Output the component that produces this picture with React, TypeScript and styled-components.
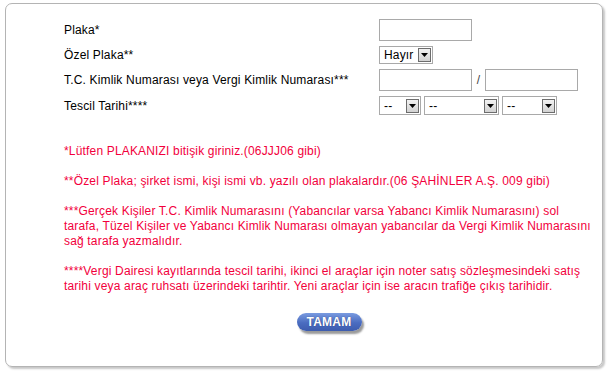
import React, { FC } from 'react';
import styled, { createGlobalStyle } from 'styled-components';

const GlobalStyle = createGlobalStyle`
  html, body {
    margin: 0;
    padding: 0;
    background: #fff;
  }
  body {
    font-family: "Liberation Sans", Arial, sans-serif;
    font-size: 12px;
    letter-spacing: 0.17px;
    color: #000;
  }
`;

const Page = styled.div`
  padding: 3px 0 0 5px;
  width: 608px;
  height: 371px;
  box-sizing: border-box;
`;

const Panel = styled.div`
  width: 598px;
  height: 364px;
  box-sizing: border-box;
  border: 1px solid #b4b4b4;
  border-radius: 7px;
  box-shadow: 2px 2px 2px #c8c8c8;
  padding: 15px 12px 0 58px;
`;

const FormGrid = styled.div`
  display: grid;
  grid-template-columns: 315px auto;
  grid-template-rows: 22px 18px 22px 19px;
  row-gap: 5px;
  align-items: center;
`;

const Label = styled.div`
  line-height: 14px;
  white-space: nowrap;
`;

const Field = styled.div`
  display: flex;
  align-items: center;
  gap: 3px;
`;

const TextBox = styled.input<{ w: number }>`
  width: ${p => p.w}px;
  height: 22px;
  box-sizing: border-box;
  border: 1px solid #a9a9a9;
  background: #fff;
  padding: 0 3px;
  margin: 0;
  font: 12px "Liberation Sans", Arial, sans-serif;
  outline: none;
`;

const Slash = styled.span`
  width: 7px;
  text-align: center;
  color: #444;
`;

const SelectBox = styled.div<{ w: number; h: number }>`
  width: ${p => p.w}px;
  height: ${p => p.h}px;
  box-sizing: border-box;
  border: 1px solid #a9a9a9;
  background: #fff;
  display: flex;
  align-items: center;
  justify-content: space-between;
  padding: 0 1px 0 4px;
  font-size: 12px;
  color: #000;
`;

const ArrowBtn = styled.span`
  width: 13px;
  height: 14px;
  box-sizing: border-box;
  border: 1px solid #6d6d6d;
  background: linear-gradient(#f2f2f2, #d2d2d2);
  display: flex;
  align-items: center;
  justify-content: center;
`;

const Select: FC<{ value: string; w: number; h?: number }> = ({ value, w, h = 19 }) => (
  <SelectBox w={w} h={h}>
    <span>{value}</span>
    <ArrowBtn>
      <svg width="7" height="4" viewBox="0 0 7 4">
        <polygon points="0,0 7,0 3.5,4" fill="#000" />
      </svg>
    </ArrowBtn>
  </SelectBox>
);

const Notes = styled.div`
  margin-top: 29px;
  color: #f2003c;
  line-height: 15px;
  display: flex;
  flex-direction: column;
  gap: 15px;
  white-space: nowrap;
`;

const Note = styled.p`
  margin: 0;
`;

const ButtonRow = styled.div`
  display: flex;
  justify-content: center;
  width: 530px;
  margin-top: 19px;
`;

const OkButton = styled.button`
  width: 65px;
  height: 18px;
  border: none;
  border-radius: 9px;
  background: linear-gradient(#7a9be0, #4a6cc0 55%, #3d5cae);
  box-shadow: 2px 3px 2px #9a9a9a;
  color: #fff;
  font: bold 12px "Liberation Sans", Arial, sans-serif;
  letter-spacing: 0.2px;
  padding: 0;
  text-shadow: 0 0 1px #2a3f7a;
`;

const App: FC = () => (
  <>
    <GlobalStyle />
    <Page>
      <Panel>
        <FormGrid>
          <Label>Plaka*</Label>
          <Field>
            <TextBox w={93} />
          </Field>
          <Label>Özel Plaka**</Label>
          <Field>
            <Select value="Hayır" w={54} h={18} />
          </Field>
          <Label>T.C. Kimlik Numarası veya Vergi Kimlik Numarası***</Label>
          <Field>
            <TextBox w={93} />
            <Slash>/</Slash>
            <TextBox w={93} />
          </Field>
          <Label>Tescil Tarihi****</Label>
          <Field>
            <Select value="--" w={42} />
            <Select value="--" w={75} />
            <Select value="--" w={55} />
          </Field>
        </FormGrid>
        <Notes>
          <Note>*Lütfen PLAKANIZI bitişik giriniz.(06JJJ06 gibi)</Note>
          <Note>**Özel Plaka; şirket ismi, kişi ismi vb. yazılı olan plakalardır.(06 ŞAHİNLER A.Ş. 009 gibi)</Note>
          <Note>
            ***Gerçek Kişiler T.C. Kimlik Numarasını (Yabancılar varsa Yabancı Kimlik Numarasını) sol
            <br />
            tarafa, Tüzel Kişiler ve Yabancı Kimlik Numarası olmayan yabancılar da Vergi Kimlik Numarasını
            <br />
            sağ tarafa yazmalıdır.
          </Note>
          <Note>
            ****Vergi Dairesi kayıtlarında tescil tarihi, ikinci el araçlar için noter satış sözleşmesindeki satış
            <br />
            tarihi veya araç ruhsatı üzerindeki tarihtir. Yeni araçlar için ise aracın trafiğe çıkış tarihidir.
          </Note>
        </Notes>
        <ButtonRow>
          <OkButton>TAMAM</OkButton>
        </ButtonRow>
      </Panel>
    </Page>
  </>
);

export default App;
